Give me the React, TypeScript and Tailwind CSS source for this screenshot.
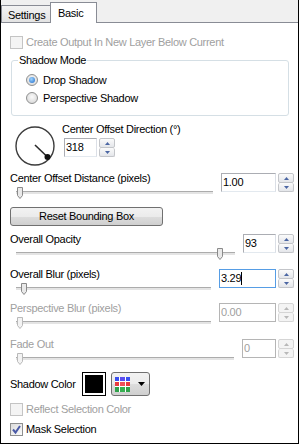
import React from 'react';

function CheckBox({ checked = false, disabled = false }: { checked?: boolean; disabled?: boolean }) {
  return (
    <div
      className={`w-[13px] h-[13px] shrink-0 border flex items-center justify-center ${
        disabled ? 'border-[#c4c4c4] bg-[#f4f4f4]' : 'border-[#8e8f8f] bg-[linear-gradient(135deg,#dcdcdc,#fbfbfb)]'
      }`}
    >
      {checked && (
        <svg width="11" height="11" viewBox="0 0 11 11">
          <path d="M2 5.5 L4.5 8.5 L9 2" fill="none" stroke="#4a5aa6" strokeWidth="2" />
        </svg>
      )}
    </div>
  );
}

function Radio({ checked = false }: { checked?: boolean }) {
  return (
    <div className="w-[12px] h-[12px] shrink-0 rounded-full border border-[#8e8f8f] bg-[radial-gradient(circle_at_50%_40%,#fafafa,#d2d2d2)] flex items-center justify-center">
      {checked && (
        <div className="w-[6px] h-[6px] rounded-full bg-[radial-gradient(circle_at_40%_35%,#9fd5ff,#1d69c9)]" />
      )}
    </div>
  );
}

function Arrow({ up, disabled }: { up: boolean; disabled?: boolean }) {
  return (
    <svg width="5" height="3" viewBox="0 0 5 3">
      <polygon points={up ? '0,3 2.5,0 5,3' : '0,0 2.5,3 5,0'} fill={disabled ? '#b8b8b8' : '#4b66a3'} />
    </svg>
  );
}

function Spin({
  value,
  box,
  disabled = false,
  focused = false,
}: {
  value: string;
  box: string;
  disabled?: boolean;
  focused?: boolean;
}) {
  const border = focused
    ? 'border-[#569de5]'
    : disabled
    ? 'border-[#b5b5b5] bg-[#f4f4f4] text-[#a0a0a0]'
    : 'border-[#abadb3] border-r-[#dbdfe6] border-b-[#e3e9ef]';
  const btn = disabled
    ? 'border-[#d5d5d5] bg-[#f4f4f4]'
    : 'border-[#c3c5c9] bg-[linear-gradient(#fbfbfb,#e4e6ea)]';
  return (
    <div className="flex">
      <div className={`h-[19px] ${box} border pl-[1px] flex items-center bg-white ${border}`}>
        <span>{value}</span>
        {focused && <span className="w-px h-[13px] bg-black" />}
      </div>
      <div className="ml-[2px] w-[16px] h-[19px] flex flex-col">
        <div className={`h-[10px] border rounded-[2px] flex items-center justify-center ${btn}`}>
          <Arrow up disabled={disabled} />
        </div>
        <div className={`h-[9px] border border-t-0 rounded-[2px] flex items-center justify-center ${btn}`}>
          <Arrow up={false} disabled={disabled} />
        </div>
      </div>
    </div>
  );
}

function Slider({ thumb, disabled = false }: { thumb: string; disabled?: boolean }) {
  return (
    <div className="relative h-[14px] ml-[6px] mr-[8px]">
      <div className="absolute left-0 right-0 top-[6px] h-[3px] border-t border-[#acacac] bg-[#e4e4e4]" />
      <svg className={`absolute top-[2px] ${thumb}`} width="7" height="12" viewBox="0 0 7 12">
        <path
          d="M0.5 0.5 H5.5 V8.5 L3 11.5 L0.5 8.5 Z"
          fill={disabled ? '#f3f3f3' : '#e9e9e9'}
          stroke={disabled ? '#b9b9b9' : '#8a8a8a'}
        />
      </svg>
    </div>
  );
}

function Field({
  label,
  thumb,
  spin,
  disabled = false,
  className,
}: {
  label: string;
  thumb: string;
  spin: React.ReactNode;
  disabled?: boolean;
  className: string;
}) {
  return (
    <div className={`flex items-start ${className}`}>
      <div className="flex-1 flex flex-col">
        <div className={`h-[13px] ${disabled ? 'text-[#a0a0a0]' : ''}`}>{label}</div>
        <Slider thumb={thumb} disabled={disabled} />
      </div>
      <div className="mt-[1px]">{spin}</div>
    </div>
  );
}

function Dial() {
  return (
    <svg className="ml-[4px] mt-[2px] shrink-0" width="42" height="42" viewBox="0 0 42 42">
      <circle cx="21" cy="21" r="19" fill="none" stroke="#3c3c3c" strokeWidth="1.4" />
      <line x1="21" y1="20" x2="33.5" y2="32" stroke="#2a2a2a" strokeWidth="1.6" />
      <circle cx="33.5" cy="32" r="3" fill="#111" />
    </svg>
  );
}

function PaletteIcon() {
  const cells = ['#3a4ff0', '#5a4cf0', '#3a4ff0', '#e8393f', '#f0505a', '#e8393f', '#2fa14a', '#37b052', '#2fa14a'];
  return (
    <div className="grid grid-cols-3 gap-[1px] w-[15px] h-[15px] bg-white p-0">
      {cells.map((c, i) => (
        <div key={i} style={{ backgroundColor: c }} />
      ))}
    </div>
  );
}

export default function App() {
  return (
    <div className="w-[299px] h-[444px] bg-white border-x border-b border-black flex flex-col font-['Liberation_Sans',Arial,sans-serif] text-[11px] leading-[13px] tracking-[-0.3px] text-black overflow-hidden">
      {/* tabs */}
      <div className="h-[23px] shrink-0 flex items-end bg-[#f0f0f0] border-b border-[#898c95]">
        <div className="h-[17px] w-[49px] border-t border-l border-[#898c95] bg-[linear-gradient(#f3f3f3,#e3e3e3)] pl-[6px] pt-[2px] flex items-center">
          Settings
        </div>
        <div className="relative h-[21px] w-[47px] -mb-px border-x border-t border-[#898c95] bg-white pl-[7px] flex items-center">
          Basic
        </div>
      </div>

      <div className="flex flex-col pl-[9px] pr-[4px]">
        <div className="mt-[13px] h-[13px] flex items-center">
          <CheckBox disabled />
          <span className="ml-[3px] text-[#a0a0a0]">Create Output In New Layer Below Current</span>
        </div>

        {/* Shadow Mode group */}
        <div className="relative mt-[11px] ml-[1px] w-[278px] h-[56px] border border-[#d5dfe5] rounded-[3px] pt-[13px] pl-[14px]">
          <span className="absolute -top-[7px] left-[6px] px-[1px] bg-white">Shadow Mode</span>
          <div className="h-[12px] flex items-center">
            <Radio checked />
            <span className="ml-[5px]">Drop Shadow</span>
          </div>
          <div className="mt-[6px] h-[12px] flex items-center">
            <Radio />
            <span className="ml-[5px]">Perspective Shadow</span>
          </div>
        </div>

        {/* direction dial */}
        <div className="mt-[7px] flex">
          <Dial />
          <div className="ml-[6px] flex flex-col">
            <div className="h-[13px]">Center Offset Direction (°)</div>
            <div className="ml-[2px] mt-[2px]">
              <Spin value="318" box="w-[33px]" />
            </div>
          </div>
        </div>

        <Field
          className="mt-[5px]"
          label="Center Offset Distance (pixels)"
          thumb="left-[1px]"
          spin={<Spin value="1.00" box="w-[55px]" />}
        />

        <button className="mt-[8px] w-[153px] h-[19px] border border-[#707070] rounded-[3px] bg-[linear-gradient(#f2f2f2,#ebebeb_50%,#dddddd_50%,#cfcfcf)] flex items-center justify-center">
          Reset Bounding Box
        </button>

        <Field
          className="mt-[7px]"
          label="Overall Opacity"
          thumb="left-[201px]"
          spin={<Spin value="93" box="w-[33px]" />}
        />
        <Field
          className="mt-[8px]"
          label="Overall Blur (pixels)"
          thumb="left-[5px]"
          spin={<Spin value="3.29" box="w-[57px]" focused />}
        />
        <Field
          className="mt-[7px]"
          label="Perspective Blur (pixels)"
          thumb="left-[1px]"
          disabled
          spin={<Spin value="0.00" box="w-[57px]" disabled />}
        />
        <Field
          className="mt-[9px]"
          label="Fade Out"
          thumb="left-[1px]"
          disabled
          spin={<Spin value="0" box="w-[34px]" disabled />}
        />

        {/* shadow color */}
        <div className="mt-[7px] h-[24px] flex items-center">
          <span className="w-[72px]">Shadow Color</span>
          <div className="w-[24px] h-[24px] border border-black bg-white p-[2px]">
            <div className="w-full h-full bg-black" />
          </div>
          <div className="ml-[5px] w-[39px] h-[24px] border border-[#707070] rounded-[3px] bg-[linear-gradient(#f2f2f2,#ebebeb_50%,#dddddd_50%,#cfcfcf)] flex items-center pl-[3px]">
            <PaletteIcon />
            <svg className="ml-[8px]" width="7" height="4" viewBox="0 0 7 4">
              <polygon points="0,0 3.5,4 7,0" fill="#000" />
            </svg>
          </div>
        </div>

        <div className="mt-[7px] h-[13px] flex items-center">
          <CheckBox disabled />
          <span className="ml-[3px] text-[#a0a0a0]">Reflect Selection Color</span>
        </div>
        <div className="mt-[7px] h-[13px] flex items-center">
          <CheckBox checked />
          <span className="ml-[3px]">Mask Selection</span>
        </div>
      </div>
    </div>
  );
}
